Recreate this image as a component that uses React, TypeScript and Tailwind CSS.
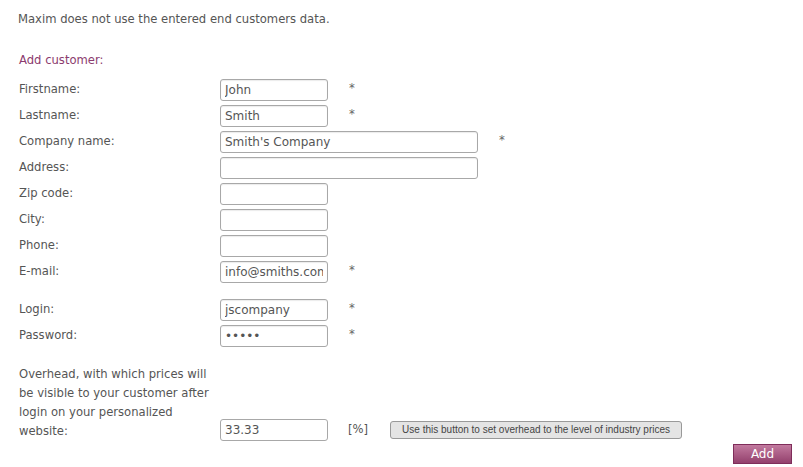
import React from 'react';

type Field = { label: string; value?: string; wide?: boolean; required?: boolean; password?: boolean };

const contact: Field[] = [
  { label: 'Firstname:', value: 'John', required: true },
  { label: 'Lastname:', value: 'Smith', required: true },
  { label: 'Company name:', value: "Smith's Company", wide: true, required: true },
  { label: 'Address:', wide: true },
  { label: 'Zip code:' },
  { label: 'City:' },
  { label: 'Phone:' },
  { label: 'E-mail:', value: 'info@smiths.com', required: true },
];

const account: Field[] = [
  { label: 'Login:', value: 'jscompany', required: true },
  { label: 'Password:', value: 'abcde', required: true, password: true },
];

function Row({ f }: { f: Field }) {
  return (
    <div className="flex h-[26px] items-center">
      <label className="w-[201px] shrink-0">{f.label}</label>
      <input
        type={f.password ? 'password' : 'text'}
        defaultValue={f.value}
        className={`${f.wide ? 'w-[258px]' : 'w-[108px]'} h-[22px] shrink-0 rounded-[3px] border border-[#a8a8a8] bg-white px-[4px] text-[12px] text-[#555] shadow-[inset_0_1px_1px_rgba(0,0,0,0.08)] outline-none`}
      />
      {f.required && <span className="ml-[21px] -mt-[2px] text-[#666]">*</span>}
    </div>
  );
}

export default function App() {
  return (
    <div className="relative h-[467px] w-[803px] bg-white px-[18px] pt-[10px] text-[11.6px] text-[#555] [font-family:'DejaVu_Sans',sans-serif]">
      <p className="leading-[18px]">Maxim does not use the entered end customers data.</p>
      <h3 className="mt-[23px] pl-[1px] leading-[18px] text-[#8b3b6e]">Add customer:</h3>

      <div className="mt-[8px] pl-[1px]">
        {contact.map((f) => (
          <Row key={f.label} f={f} />
        ))}
        <div className="mt-[12px]">
          {account.map((f) => (
            <Row key={f.label} f={f} />
          ))}
        </div>

        <div className="mt-[16px] flex items-end">
          <p className="w-[201px] shrink-0 pr-[4px] leading-[19px]">
            Overhead, with which prices will be visible to your customer after login on your personalized website:
          </p>
          <div className="flex h-[22px] items-center">
            <input
              type="text"
              defaultValue="33.33"
              className="h-[22px] w-[108px] rounded-[3px] border border-[#a8a8a8] bg-white px-[4px] text-[12px] text-[#555] outline-none"
            />
            <span className="ml-[20px]">[%]</span>
            <button className="ml-[22px] h-[18px] w-[292px] whitespace-nowrap rounded-[3px] border border-[#999] bg-[#e4e4e4] text-[10px] leading-none text-[#444] [font-family:'Liberation_Sans',sans-serif]">
              Use this button to set overhead to the level of industry prices
            </button>
          </div>
        </div>
      </div>

      <div className="absolute bottom-[3px] right-[11px]">
        <button className="h-[20px] w-[59px] border border-[#7f2d5a] bg-gradient-to-b from-[#c27a9f] to-[#93406d] text-[12px] leading-none text-white">
          Add
        </button>
      </div>
    </div>
  );
}
